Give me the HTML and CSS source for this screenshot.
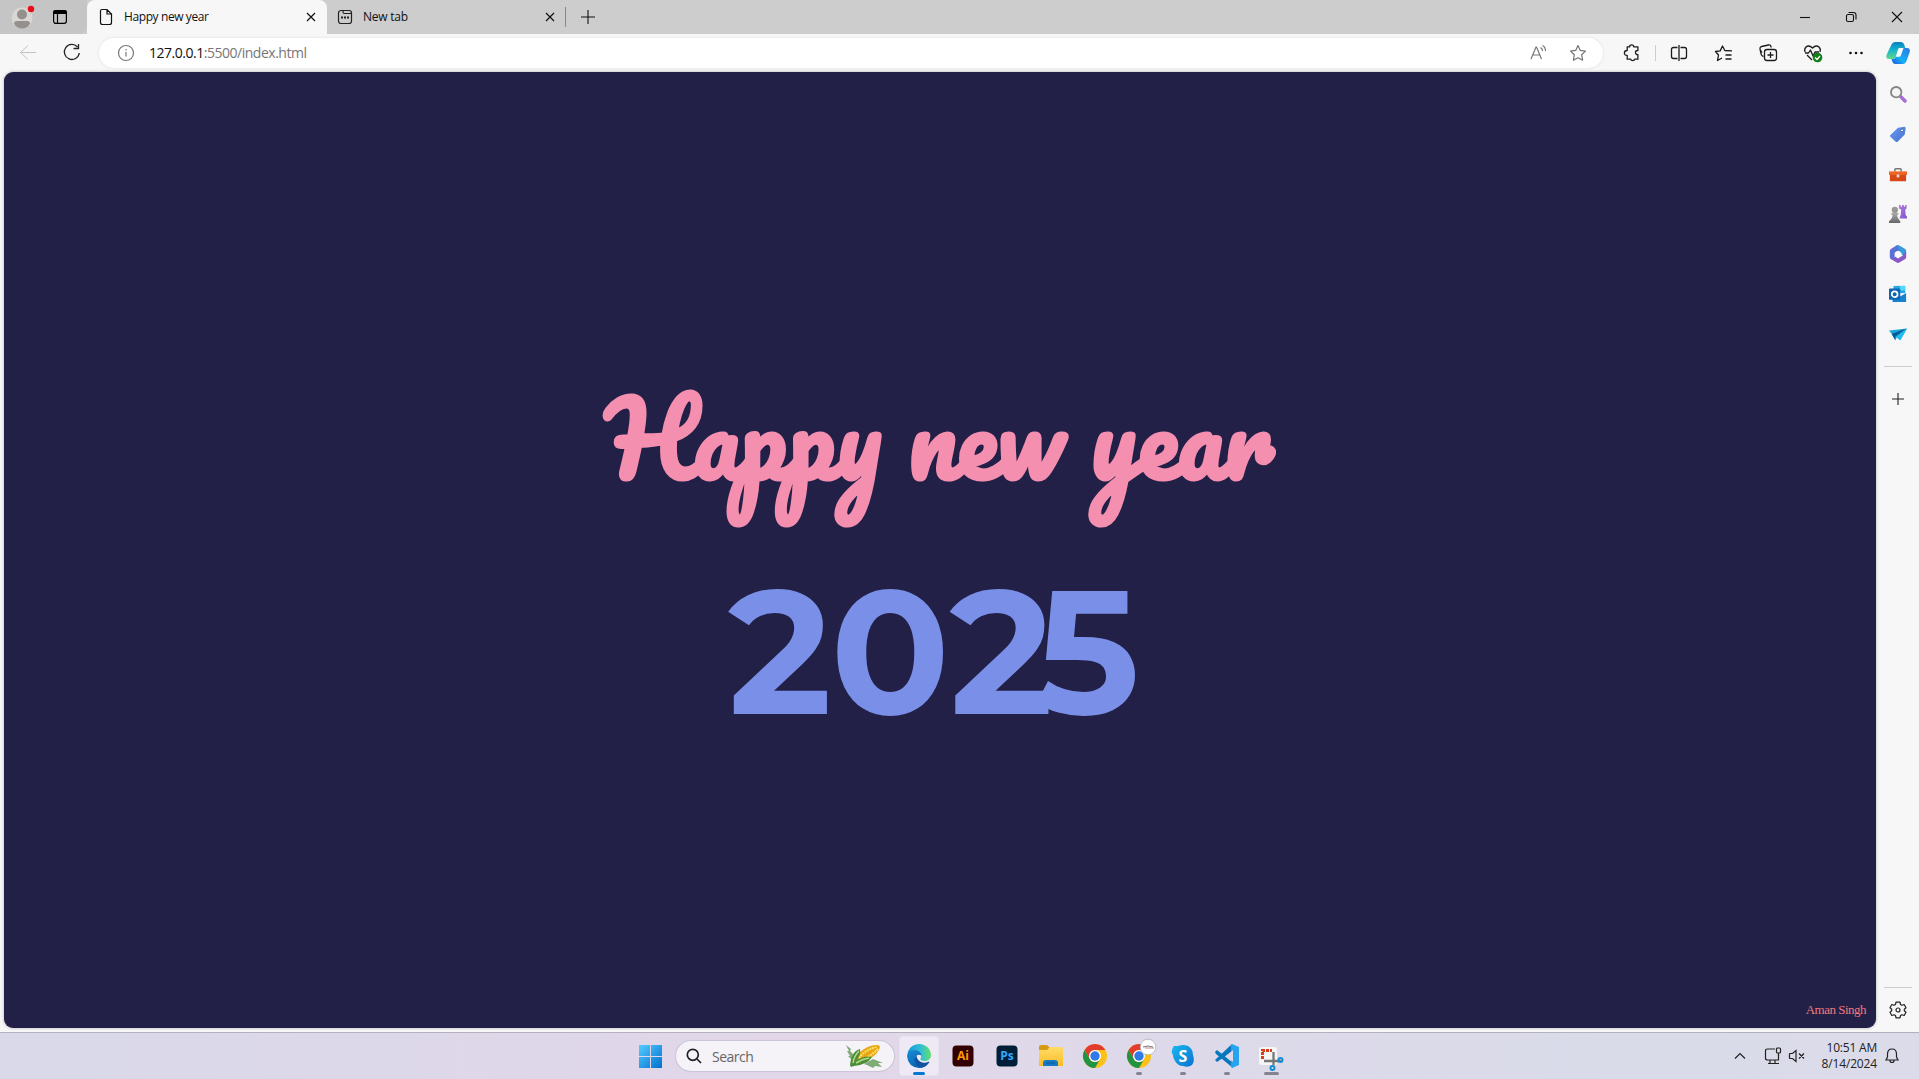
FILE: index.html
```
<!DOCTYPE html>
<html lang="en">
<head>
<meta charset="utf-8">
<title>Happy new year</title>
<link rel="stylesheet" href="styles.css">
</head>
<body>
<svg class="defs" aria-hidden="true">
  <defs>
    <linearGradient id="blue" x2="1" y2="1"><stop stop-color="#55cbff"/><stop offset="1" stop-color="#0071ce"/></linearGradient>
    <linearGradient id="copA" x2="0" y2="1"><stop stop-color="#0a7fc0"/><stop offset=".45" stop-color="#13b5cb"/><stop offset="1" stop-color="#62d88a"/></linearGradient>
    <linearGradient id="copB" x1="1" x2="0" y2="1"><stop stop-color="#2b78e4"/><stop offset=".6" stop-color="#17b0f5"/><stop offset="1" stop-color="#1c54dc"/></linearGradient>
    <linearGradient id="edgeTop" x2="1"><stop stop-color="#1696d4"/><stop offset=".55" stop-color="#32bfd6"/><stop offset="1" stop-color="#62df67"/></linearGradient>
    <linearGradient id="edgeLow" x2="1" y2="1"><stop stop-color="#1490d8"/><stop offset="1" stop-color="#0c4da4"/></linearGradient>
    <linearGradient id="tag" x2="1" y2="1"><stop stop-color="#6d9cf0"/><stop offset="1" stop-color="#4470ce"/></linearGradient>
    <linearGradient id="folder" y2="1" x2="0"><stop stop-color="#ffdc65"/><stop offset="1" stop-color="#f9bd2c"/></linearGradient>
    <linearGradient id="sky" x2="1" y2="1"><stop stop-color="#19b9f0"/><stop offset="1" stop-color="#0872d0"/></linearGradient>
    <linearGradient id="gray" x2="0" y2="1"><stop stop-color="#aaa"/><stop offset="1" stop-color="#666"/></linearGradient>
    <linearGradient id="violet" x2="1" y2="1"><stop stop-color="#b57be0"/><stop offset="1" stop-color="#7b55c7"/></linearGradient>
    <g id="chrome">
      <circle cx="12" cy="12" r="12" fill="#fbc116"/>
      <path d="M1.6 6A12 12 0 0 1 22.4 6H12a6 6 0 0 0-5.2 9z" fill="#e33b2e"/>
      <path d="M1.6 6A12 12 0 0 0 12 24l5.2-9A6 6 0 0 1 6.8 15z" fill="#229342"/>
      <circle cx="12" cy="12" r="6" fill="#fff"/><circle cx="12" cy="12" r="4.7" fill="#2f79e8"/>
    </g>
  </defs>
</svg>

<header class="tabstrip">
  <div class="tab-tools">
    <svg class="avatar" width="24" height="24" viewBox="0 0 24 24"><circle cx="12" cy="13" r="10.5" fill="#d9d7d4"/><circle cx="12" cy="9.5" r="5" fill="#94908c"/><path d="M4 18.500q0-2.500 3-2.500h10q3 0 3 2.500-2.500 5-8 5t-8-5z" fill="#94908c"/><circle cx="21" cy="4" r="3.2" fill="#e60d17"/></svg>
    <svg width="16" height="16" viewBox="0 0 16 16" fill="none" stroke="#000" stroke-width="1.2"><rect x="1.6" y="1.6" width="12.8" height="12.8" rx="2.3"/><path d="M2 2h12v2.500H2z" fill="#000"/><path d="M5.500 5v9"/></svg>
  </div>
  <div class="tab active">
    <svg width="14" height="18" viewBox="0 0 14 18" fill="none" stroke="#111" stroke-width="1.2"><path d="M3 1.500h5l4.500 4.500v8.500q0 2-2 2h-7q-2 0-2-2V3q0-1.500 1.500-1.500zM8 1.500V6h4.500"/></svg>
    <span class="tab-title first">Happy new year</span>
    <svg class="close" width="10" height="10" viewBox="0 0 10 10"><path d="M1 1l8 8M9 1L1 9"/></svg>
  </div>
  <div class="tab idle">
    <svg width="16" height="16" viewBox="0 0 16 16" fill="none" stroke="#222" stroke-width="1.2"><rect x="1.500" y="1.500" width="13" height="13" rx="2.500"/><path d="M6 1.500V3q0 1.500 1.500 1.500h7"/><path d="M4 8.500h2m1 0h2m1 0h2" stroke-width="1.800"/></svg>
    <span class="tab-title second">New tab</span>
    <svg class="close" width="10" height="10" viewBox="0 0 10 10"><path d="M1 1l8 8M9 1L1 9"/></svg>
  </div>
  <i class="tab-divider"></i>
  <svg class="new-tab" width="14" height="14" viewBox="0 0 14 14" stroke="#111" stroke-width="1.1"><path d="M0 7h14M7 0v14"/></svg>
  <div class="window-buttons">
    <svg viewBox="0 0 46 34"><path d="M18 17.500h10"/></svg>
    <svg viewBox="0 0 46 34"><rect x="18.500" y="14.500" width="7" height="7" rx="1.500"/><path d="M20.500 12.500h5q2.500 0 2.500 2.500v4.500"/></svg>
    <svg viewBox="0 0 46 34"><path d="M18 12l10 10M28 12l-10 10"/></svg>
  </div>
</header>

<nav class="toolbar">
  <svg class="nav-icon" viewBox="0 0 44 38" stroke="#c4c4c4"><path d="M36 18.500H21m7-7l-7.500 7 7.500 7"/></svg>
  <svg class="nav-icon" viewBox="0 0 44 38" stroke="#222" stroke-width="1.300"><path d="M33.500 13a7.500 7.500 0 1 0 1.800 6M34.500 10v4.500h-5"/></svg>
  <div class="address">
    <svg width="18" height="18" viewBox="0 0 18 18" fill="none" stroke="#777" stroke-width="1.200"><circle cx="9" cy="9" r="7.500"/><path d="M9 8v4.500M9 5v1.500"/></svg>
    <span class="url"><b>127.0.0.1</b>:5500/index.html</span>
    <svg width="18" height="18" viewBox="0 0 18 18" fill="none" stroke="#757575" stroke-width="1.200"><path d="M2 15L7 3h.5l5 12M4 11h6.500M11.500 3.500q2 1 2 3.500M13.500 1.500q3 1.500 3 5.500"/></svg>
    <svg width="18" height="18" viewBox="0 0 18 18" fill="none" stroke="#757575" stroke-width="1.200" stroke-linejoin="round"><path d="M9 1.500l2.300 4.900 5.200.7-3.800 3.700.9 5.400L9 13.700l-4.600 2.500.9-5.400L1.500 7.100l5.200-.7z"/></svg>
  </div>
  <div class="actions">
    <svg class="slot a1" viewBox="0 0 20 20"><path d="M5.200 3.800h2.500q0-2 2-2t2 2h4.200v3.700q-2.400-.2-2.400 1.900t2.400 2.300v4.500h-3.200q-.2 1.500-2 1.500t-2-1.500H5.200v-3.700q-2.800 0-2.800-2.500t2.800-2.500z"/></svg>
    <i class="bar"></i>
    <svg class="slot a2" viewBox="0 0 20 20"><path d="M8.500 4.500H4.500q-2 0-2 2v7q0 2 2 2h4M11.500 4.500h4q2 0 2 2v7q0 2-2 2h-4M10 2v16"/></svg>
    <svg class="slot a3" viewBox="0 0 20 20"><path d="M8 15l-4.500 2.500 1-5.500-3-3.500 4.700-.6L8.500 3l2.300 4.500 7.200.4M11.500 12h6M11.500 16h6"/></svg>
    <svg class="slot a4" viewBox="0 0 20 20"><path d="M5.500 13.500q-2-.5-2.400-2.300L2 6q-.3-2 1.500-2.500l7-1.500q2-.4 2.500 1.500l.3 1M4 9.500l-1.500-2"/><rect x="6.500" y="6.500" width="12" height="11" rx="2.500"/><path d="M12.500 9v6M9.500 12h6"/></svg>
    <svg class="slot a5" viewBox="0 0 20 20"><path d="M2 9q-1-3 1-5 3-2.500 6.500 1 3.500-3.500 6.500-1 2 2 1 5M4 12l5 5M2 10h3.500L7.500 7l2.500 6 2-4h4"/><circle cx="14.500" cy="14.500" r="4.800" fill="#127d18" stroke="none"/><path d="M12 14.500l2 2 3-3.500" stroke="#fff"/></svg>
    <svg class="slot a6" viewBox="0 0 20 20"><g fill="#111" stroke="none"><circle cx="4.500" cy="10" r="1.300"/><circle cx="10" cy="10" r="1.300"/><circle cx="15.500" cy="10" r="1.300"/></g></svg>
  </div>
  <svg class="copilot" width="24" height="24" viewBox="0 0 24 24"><path d="M5.500 3.500Q6.500 1 9 1h6q2.500 0 3.200 2.500l1 3.500H14q-1.500 0-2 2l-2.200 7q-.8 2-3 2H3q-3.500 0-2.500-4z" fill="url(#copA)"/><path d="M5.500 18h1.300q2.200 0 3-2l.7-2h4l2.500-7H21q3.500 0 2.700 4l-3.200 9q-1 3-4 3H9.500Q7 23 6.300 20.500z" fill="url(#copB)"/><path d="M12.300 8q.5-1 1.700-1h3.500l-2.700 7.500q-.5 1.200-1.800 1.200H9.900z" fill="#fbfdff"/></svg>
</nav>

<div class="browser-body">
  <main class="page">
    <svg class="greeting" width="720" height="330" viewBox="0 0 720 330">
      <text class="wish" x="25.8" y="95.7">Happy new year</text>
      <text class="year" x="148 250.5 369.5 455" y="329.500">2025</text>
    </svg>
    <p class="credit">Aman Singh</p>
  </main>
  <aside class="sidebar">
    <svg class="side" viewBox="0 0 20 20"><path d="M12 12l6 6" stroke="url(#violet)" stroke-width="3.500"/><path d="M13 13l6 6" stroke="#a66fda" stroke-width="3.500"/><circle cx="8" cy="8" r="5.800" fill="#f4f4f4" stroke="#858585" stroke-width="2"/></svg>
    <svg class="side" viewBox="0 0 20 20"><path d="M10 3l7-1q1.500 0 1.500 1.500l-1 7-8 8q-1 1-2 0L1.500 13q-1-1 0-2z" fill="url(#tag)"/><circle cx="14.500" cy="6" r="1.600" fill="#fff" stroke="#294e9b" stroke-width=".8"/></svg>
    <svg class="side low" viewBox="0 0 20 20"><path d="M6.500 6V4q0-1 1-1h5q1 0 1 1v2" fill="none" stroke="#777" stroke-width="1.700"/><path d="M0 6h20v4H0z" fill="#ee6425"/><path d="M1 10h18v6q0 1-1 1H2q-1 0-1-1z" fill="#d74814"/><circle cx="10" cy="11" r="1.700" fill="#ddd"/></svg>
    <svg class="side" viewBox="0 0 20 20"><path d="M11 0h2v2h1.500V0h2v2H18V0h1.500v4L18 5l.5 6 1.500 2v2h-8v-2l1-2 .5-6L11 4z" fill="url(#violet)"/><circle cx="6.500" cy="5.500" r="3.500" fill="#999"/><path d="M2.500 9h8v1.500L9 11q0 3 2 5l1.500 2v2H0v-2l2-2q2-2 2-5l-1.500-.5z" fill="url(#gray)"/></svg>
    <svg class="side" viewBox="0 0 20 20"><path d="M9 0L2 4.500Q1 5 1 6.500v7q0 1.500 1 2l4 1.500V9l6-3z" fill="#9065d5"/><path d="M8.500.5q1.500-1 3 0L18 4.500q1 .5 1 2v7l-5-3V9L6 5z" fill="#389bdc"/><path d="M19 7v6.500q0 1.500-1 2l-6.500 4q-1.500 1-3 0L2 15.500 7 13l3 2 5-3z" fill="#8a59c5"/><path d="M1 6v8l5 2V8l5-3-2-4z" fill="#5774d5"/><circle cx="10" cy="10" r="3.300" fill="#fff"/></svg>
    <svg class="side" viewBox="0 0 20 20"><path d="M5 1h13v8H5z" fill="#29a5e2"/><path d="M12 1h6v5h-6z" fill="#50d9ff"/><path d="M4 9l8 4 7-4v10H4z" fill="#1683d1"/><rect x="0" y="4" width="12.500" height="12.500" rx="1" fill="#0c64b5"/><circle cx="6.300" cy="10.200" r="3.200" fill="none" stroke="#fff" stroke-width="1.900"/></svg>
    <svg class="side" viewBox="0 0 20 20"><path d="M0 6l20-2-7.500 13-4-3L7 17l-4-7z" fill="#1ca6dd"/><path d="M3 10l16-6L7 13v4z" fill="#085b94"/><path d="M8 13l12-9-7.500 13z" fill="#21bdf0"/></svg>
    <hr>
    <svg class="add" viewBox="0 0 14 14"><path d="M1 7h12M7 1v12"/></svg>
    <hr class="lower">
    <svg class="gear" viewBox="0 0 18 18"><path d="M7 1.200h4l.5 2.300 1.500.8 2.200-.8 1.800 3.200-1.700 1.500v1.600l1.700 1.500-1.800 3.200-2.200-.8-1.500.8-.5 2.300H7l-.5-2.300-1.500-.8-2.200.8L1 11.300l1.700-1.500V8.200L1 6.700l1.800-3.200 2.200.8 1.500-.8z"/><circle cx="9" cy="9" r="2"/></svg>
  </aside>
</div>

<footer class="taskbar">
  <div class="dock">
    <svg class="start" viewBox="0 0 23 23" fill="url(#blue)"><path d="M0 0h11v11H0zM12 0h11v11H12zM0 12h11v11H0zM12 12h11v11H12z"/></svg>
    <div class="search">
      <svg width="16" height="16" viewBox="0 0 16 16" fill="none" stroke="#222" stroke-width="1.700"><circle cx="6.800" cy="6.800" r="5.500"/><path d="M11 11l4 4"/></svg>
      <span>Search</span>
      <svg class="corn" width="37" height="24" viewBox="0 0 37 24"><path d="M0 1l5 4-1 2 4 4-1 6-5-5 2 0-3-5 2 0zM18 20l9-5 10 4-5 0 4 4-7-1-2 2-6-3z" fill="#7fab77"/><path d="M9 17C11 8 21 1 31 1q4 0 2.500 3.500C31 12 20 18 12 19z" fill="#e8a815"/><path d="M13 14C17 8 25 4 31 3M15 17c6-3 13-8 17-12" fill="none" stroke="#ffdf63" stroke-width="2" stroke-dasharray="2 .7"/><path d="M4 21C5 14 7 7 14 5q1 5-3 11 8-5 15-3-5 8-18 9l-3 1z" fill="#4d8d3a"/><path d="M7 19q1-7 6-12M10 19q6-4 13-5" fill="none" stroke="#b4da82" stroke-width="1.600"/></svg>
    </div>
    <div class="app current"><svg viewBox="0 0 24 24"><path d="M.5 9.500C2 3.500 6.500 0 12 0c7 0 12 5 12 11 0 4-3 6-6.500 6-3 0-4.500-1-4-2.500 1.500-2 .5-5.500-3.500-6.500-4-.8-8 .2-9.500 1.500z" fill="url(#edgeTop)"/><path d="M0 12q.5-6 7-6 7 .5 7.500 5.500-4-2-6 1.500-2 5.500 4 8.500 4 1.500 9-2.500Q18 24 12 24 1 23 0 12z" fill="url(#edgeLow)"/><path d="M9.500 11Q6 15.500 9 20q3 4 6.500 3.500 4-1 6.800-5 .3-1-.8-.7-4.500 2-8.500-.3-3.500-2.500-3.500-6.500z" fill="#10539f"/></svg></div>
    <div class="app"><svg viewBox="0 0 24 24"><rect x="1.500" y="1.500" width="21" height="21" rx="4" fill="#330000"/><text x="12" y="16" class="ai">Ai</text></svg></div>
    <div class="app"><svg viewBox="0 0 24 24"><rect x="1.500" y="1.500" width="21" height="21" rx="4" fill="#001e36"/><text x="12" y="16" class="ps">Ps</text></svg></div>
    <div class="app"><svg viewBox="0 0 24 24"><path d="M0 3q0-2 2-2h6l3 3v4H0z" fill="#d79b12"/><path d="M0 6h8l3-3h11q2 0 2 2v17H0z" fill="url(#folder)"/><path d="M4 22v-3q0-3 3-3h9q3 0 3 3v3z" fill="#1679c4"/><path d="M7 19h9" stroke="#0b5da3" stroke-width="1.200"/></svg></div>
    <div class="app"><svg viewBox="0 0 24 24"><use href="#chrome"/></svg></div>
    <div class="app open"><svg viewBox="0 0 24 24"><use href="#chrome"/><circle cx="21" cy="3" r="7.800" fill="#fff" stroke="#aaa" stroke-width=".7"/><path d="M16 3q5-2 10 0" fill="none" stroke="#777" stroke-width="1"/><path d="M18 4h9" stroke="#b88" stroke-width="1"/></svg></div>
    <div class="app open"><svg viewBox="0 0 24 24"><path d="M7 2q5-2 10 0 5 3 5 9 2 6-1 10-4 3-9 1-5 0-8-5Q2 14 2 11-1 7 3 2z" fill="url(#sky)"/><text x="12" y="18" class="skype">S</text></svg></div>
    <div class="app open"><svg viewBox="0 0 24 24"><path d="M0 8l2-2 16 13v5L1 10zM0 16l17-16 2 6L2 18z" fill="#0877bd"/><path d="M17 0l7 3v18l-7 3-1-1V1z" fill="#27a4ed"/><path d="M18 6v12l-7-6z" fill="#dcd8e9"/></svg></div>
    <div class="app focus"><svg viewBox="0 0 24 24"><rect x="0" y="3" width="18" height="18" rx="2" fill="#f5f5f5"/><path d="M3.500 15V6.500H13" fill="none" stroke="#d8401b" stroke-width="3" stroke-dasharray="3 1"/><path d="M5 17h17M14.500 8v13" stroke="#777" stroke-width="2.300"/><g fill="none" stroke="#168ed1" stroke-width="2"><circle cx="21.500" cy="16" r="2"/><circle cx="13.500" cy="24" r="2"/></g></svg></div>
  </div>
  <div class="tray">
    <svg class="chev" viewBox="0 0 12 8"><path d="M1 6.500l5-5 5 5"/></svg>
    <svg class="net" viewBox="0 0 18 18"><path d="M11 2H3.500Q1.500 2 1.500 4v7q0 2 2 2h11V8M4 16.500h11M6 13v3M11 13v3"/><rect x="12.500" y="1" width="4" height="5" rx="1"/><path d="M14.500 6v3"/></svg>
    <svg class="vol" viewBox="0 0 18 14"><path d="M2 4.500h2.500L8 1.500v11L4.500 9.500H2q-.5 0-.5-.5V5q0-.5.5-.5zM11 4.500l5 5M16 4.500l-5 5"/></svg>
    <time class="clock"><span>10:51 AM</span><span class="date">8/14/2024</span></time>
    <svg class="bell" viewBox="0 0 14 16"><path d="M7 1q4.500 0 4.500 5v3l1.500 3H1l1.500-3V6Q2.500 1 7 1zM5 12.500q0 2 2 2t2-2"/></svg>
  </div>
</footer>
</body>
</html>
```
FILE: styles.css
```
* { box-sizing: border-box; }
body {
  margin: 0; width: 1919px; height: 1079px; overflow: hidden;
  display: grid; grid-template-rows: 34px 38px 960px 47px;
  background: #f7f7f7; color: #222;
  font-family: "Segoe UI", "Open Sans", sans-serif;
}
svg { display: block; flex: none; overflow: visible; }
.defs { position: absolute; width: 0; height: 0; }

.tabstrip { display: flex; align-items: center; background: #cdcdcd; }
.tab-tools { width: 87px; height: 34px; display: flex; align-items: center; gap: 18px; padding-left: 10px; background: #c5c5c5; border-radius: 0 0 8px 0; }
.tab { height: 34px; display: flex; align-items: center; }
.tab.active { width: 240px; padding: 0 11px 0 12px; background: #f7f7f7; border-radius: 8px 8px 0 0; }
.tab.idle { width: 238px; padding: 0 10px; }
.tab-title { font-size: 12px; line-height: 16px; padding-bottom: 1px; color: #111; margin-left: 11px; white-space: nowrap; }
.first { letter-spacing: -.4px; }
.second { margin-left: 10px; letter-spacing: -.25px; }
.close { margin-left: auto; stroke: #111; stroke-width: 1.2; }
.tab-divider { width: 1px; height: 20px; background: #888; }
.new-tab { margin-left: 14.5px; }
.window-buttons { display: flex; margin-left: auto; margin-right: -1px; }
.window-buttons svg { width: 46px; height: 34px; fill: none; stroke: #111; stroke-width: 1.1; }

.toolbar { display: flex; align-items: center; }
.nav-icon { width: 44px; height: 38px; fill: none; }
.address { width: 1504px; height: 30px; margin-left: 11px; padding: 0 16px 0 18px; border-radius: 15px; background: #fff; display: flex; align-items: center; box-shadow: 0 0 3px #ddd; }
.url { flex: 1; margin-left: 14px; font-size: 14px; line-height: 18px; padding-bottom: 1px; letter-spacing: -.48px; color: #777; }
.url b { font-weight: 400; color: #111; }
.address svg:last-child { margin-left: 22px; }
.actions { display: flex; align-items: center; width: 265px; padding-left: 19px; }
.slot { width: 20px; height: 20px; fill: none; stroke: #1c1c1c; stroke-width: 1.3; stroke-linejoin: round; }
.bar { width: 1px; height: 16px; background: #ccc; margin-left: 13px; }
.a2 { margin-left: 13px; }
.a3, .a5 { margin-left: 25px; }
.a4 { margin-left: 24px; }
.a6 { margin-left: 23px; }
.copilot { margin-left: 18px; }

.browser-body { display: grid; grid-template-columns: 1872px 43px; padding: 0 0 4px 4px; }
.page { height: 956px; background: #222047; border-radius: 9px; display: flex; flex-direction: column; align-items: center; box-shadow: 0 0 3px #aaa; }
.greeting { margin-top: 312px; }
.wish { font: 700 100px "Pacifico", cursive; fill: #f58fb0; }
.year { font: 700 176px "Montserrat", sans-serif; fill: #7a90e8; }
.credit { margin: auto 10px 9px auto; color: #f0797c; font: 13px/18px "Liberation Serif", "Times New Roman", serif; letter-spacing: -.5px; }

.sidebar { display: flex; flex-direction: column; align-items: center; padding: 12px 0 9px 1px; }
.side { width: 18px; height: 20px; margin-bottom: 20px; }
.side.low { margin: 1px 0 19px; }
.sidebar hr { width: 28px; height: 1px; border: 0; background: #ccc; margin: 2px 0 0; flex: none; }
.add { width: 14px; height: 14px; margin-top: 25px; stroke: #222; stroke-width: 1.1; }
.sidebar .lower { margin: auto 0 13px; }
.gear { width: 18px; height: 18px; fill: none; stroke: #222; stroke-width: 1.2; stroke-linejoin: round; }

.taskbar { position: relative; display: flex; justify-content: space-between; align-items: center; border-top: 1px solid #b2b1bd; background: linear-gradient(90deg, #d9d9e9, #dfd7e9 32%, #e2d7e8 42%, #ded9ea 58%, #d9dbe9 85%, #dcdbea); }
.dock { display: flex; align-items: center; margin-left: 639px; }
.start { width: 23px; height: 23px; }
.search { width: 218px; height: 30px; border-radius: 15px; margin: 0 3px 0 14px; padding: 0 10px; background: #f5f2f8; box-shadow: 0 0 1px 1px #cbc4d6; display: flex; align-items: center; color: #666; font-size: 14px; }
.search span { margin-left: 10px; letter-spacing: -.5px; }
.corn { margin-left: auto; margin-right: 1px; }
.app { width: 44px; height: 46px; display: grid; place-items: center; position: relative; }
.app svg { width: 24px; height: 24px; }
.app::after { content: ""; position: absolute; bottom: 4px; height: 3px; border-radius: 2px; background: #858390; }
.app.open::after { width: 6px; }
.app.focus::after { width: 15px; }
.app.current::before { content: ""; position: absolute; width: 38px; height: 38px; border-radius: 4px; background: #eee9f4; border: 1px solid #e8e3ef; }
.app.current svg { position: relative; }
.app.current::after { width: 12px; background: #0878d1; }
.ai, .ps, .skype { font: 700 12px "Open Sans", sans-serif; text-anchor: middle; }
.ai { fill: #ff9a00; }
.ps { fill: #31a8ff; }
.skype { font-size: 16px; fill: #fff; }

.tray { display: flex; align-items: center; padding-right: 20px; }
.tray svg { fill: none; stroke: #222; stroke-width: 1.2; }
.chev { width: 12px; height: 8px; }
.net { width: 18px; height: 18px; margin-left: 18px; }
.vol { width: 18px; height: 14px; margin-left: 6px; }
.clock { width: 71px; display: flex; flex-direction: column; text-align: right; font-size: 12px; line-height: 16px; letter-spacing: -.2px; white-space: nowrap; }
.date { letter-spacing: -.15px; }
.bell { width: 14px; height: 16px; margin-left: 8px; }
```
